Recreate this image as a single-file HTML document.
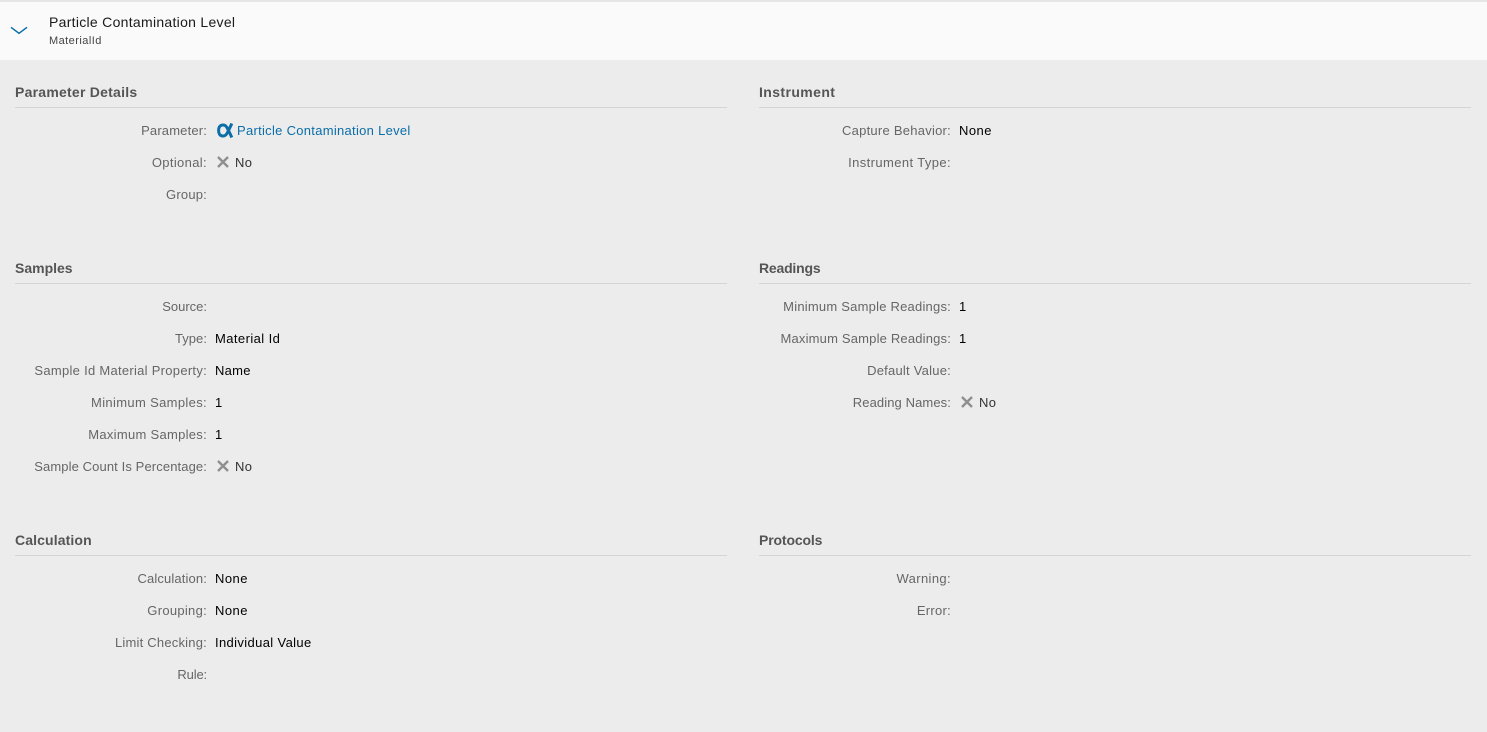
<!DOCTYPE html>
<html><head><meta charset="utf-8"><style>
html,body{margin:0;padding:0;width:1487px;height:732px;overflow:hidden;background:#ececec}
body{position:relative;font-family:"Liberation Sans",sans-serif;font-size:13px;color:#000}
#hd{position:absolute;left:0;top:2px;width:1487px;height:58px;background:#fafafa}
#tl{position:absolute;left:0;top:0;width:1487px;height:2px;background:#e6e6e6}
.t{position:absolute;white-space:nowrap;line-height:22px;letter-spacing:.3px}
.h{position:absolute;white-space:nowrap;line-height:20px;font-weight:bold;color:#555;font-size:14px}
.r{position:absolute;height:1px;width:712px;background:#d4d4d4}
.l{position:absolute;white-space:nowrap;line-height:22px;color:#666;text-align:right;width:240px}
.x{position:absolute;width:14px;height:14px}
</style></head><body>
<div id="tl"></div><div id="hd"></div>
<svg style="position:absolute;left:10px;top:25px" width="18" height="10"><path d="M1 2.3 L9 8.3 L17 2.3" fill="none" stroke="#0a6ea8" stroke-width="1.5"/></svg>
<div class="t" style="left:49px;top:12px;color:#1a1a1a;font-size:14px;letter-spacing:.29px;line-height:20px">Particle Contamination Level</div>
<div class="t" style="left:49px;top:31px;font-size:11px;letter-spacing:.45px;color:#444;line-height:20px">MaterialId</div>

<div class="h" style="left:15px;top:82px;letter-spacing:.24px">Parameter Details</div><div class="r" style="left:15px;top:107px"></div>
<div class="h" style="left:759px;top:82px;letter-spacing:.4px">Instrument</div><div class="r" style="left:759px;top:107px"></div>
<div class="h" style="left:15px;top:258px;letter-spacing:0">Samples</div><div class="r" style="left:15px;top:283px"></div>
<div class="h" style="left:759px;top:258px;letter-spacing:-.2px">Readings</div><div class="r" style="left:759px;top:283px"></div>
<div class="h" style="left:15px;top:530px;letter-spacing:.12px">Calculation</div><div class="r" style="left:15px;top:555px"></div>
<div class="h" style="left:759px;top:530px;letter-spacing:-.14px">Protocols</div><div class="r" style="left:759px;top:555px"></div>

<div class="l" style="left:-33px;top:120px;letter-spacing:.16px">Parameter:</div>
<svg style="position:absolute;left:216px;top:122px" width="18" height="17"><path d="M15.8 1.5 C14.5 4.5 13.5 6.5 12 9.5 C10.5 12.5 9.5 14 7 14 C3.8 14 2.6 11.5 2.6 8.5 C2.6 5.5 3.8 3 7 3 C9.5 3 10.5 4.5 12 7.5 C13.5 10.5 14.5 12.5 15.8 15.5" fill="none" stroke="#0b6ea6" stroke-width="3"/></svg>
<div class="t" style="left:237px;top:120px;color:#0a6ea8;letter-spacing:.29px">Particle Contamination Level</div>
<div class="l" style="left:-33px;top:152px;letter-spacing:.35px">Optional:</div>
<svg class="x" style="left:216px;top:155px"><path d="M2 2 L12 12 M12 2 L2 12" stroke="#8f8f8f" stroke-width="2.4"/></svg>
<div class="t" style="left:235px;top:152px;color:#333">No</div>
<div class="l" style="left:-33px;top:184px;letter-spacing:.2px">Group:</div>

<div class="l" style="left:711px;top:120px;letter-spacing:.25px">Capture Behavior:</div>
<div class="t" style="left:959px;top:120px;letter-spacing:.45px">None</div>
<div class="l" style="left:711px;top:152px;letter-spacing:.39px">Instrument Type:</div>

<div class="l" style="left:-33px;top:296px">Source:</div>
<div class="l" style="left:-33px;top:328px;letter-spacing:.05px">Type:</div>
<div class="t" style="left:215px;top:328px;letter-spacing:.42px">Material Id</div>
<div class="l" style="left:-33px;top:360px;letter-spacing:.28px">Sample Id Material Property:</div>
<div class="t" style="left:215px;top:360px;letter-spacing:.27px">Name</div>
<div class="l" style="left:-33px;top:392px;letter-spacing:.34px">Minimum Samples:</div>
<div class="t" style="left:215px;top:392px">1</div>
<div class="l" style="left:-33px;top:424px;letter-spacing:.29px">Maximum Samples:</div>
<div class="t" style="left:215px;top:424px">1</div>
<div class="l" style="left:-33px;top:456px;letter-spacing:.11px">Sample Count Is Percentage:</div>
<svg class="x" style="left:216px;top:459px"><path d="M2 2 L12 12 M12 2 L2 12" stroke="#8f8f8f" stroke-width="2.4"/></svg>
<div class="t" style="left:235px;top:456px;color:#333">No</div>

<div class="l" style="left:711px;top:296px;letter-spacing:.22px">Minimum Sample Readings:</div>
<div class="t" style="left:959px;top:296px">1</div>
<div class="l" style="left:711px;top:328px;letter-spacing:.18px">Maximum Sample Readings:</div>
<div class="t" style="left:959px;top:328px">1</div>
<div class="l" style="left:711px;top:360px;letter-spacing:.23px">Default Value:</div>
<div class="l" style="left:711px;top:392px;letter-spacing:.1px">Reading Names:</div>
<svg class="x" style="left:960px;top:395px"><path d="M2 2 L12 12 M12 2 L2 12" stroke="#8f8f8f" stroke-width="2.4"/></svg>
<div class="t" style="left:979px;top:392px;color:#333">No</div>

<div class="l" style="left:-33px;top:568px;letter-spacing:.13px">Calculation:</div>
<div class="t" style="left:215px;top:568px;letter-spacing:.45px">None</div>
<div class="l" style="left:-33px;top:600px;letter-spacing:.29px">Grouping:</div>
<div class="t" style="left:215px;top:600px;letter-spacing:.45px">None</div>
<div class="l" style="left:-33px;top:632px;letter-spacing:.21px">Limit Checking:</div>
<div class="t" style="left:215px;top:632px;letter-spacing:.36px">Individual Value</div>
<div class="l" style="left:-33px;top:664px;letter-spacing:-.15px">Rule:</div>

<div class="l" style="left:711px;top:568px;letter-spacing:.37px">Warning:</div>
<div class="l" style="left:711px;top:600px;letter-spacing:.28px">Error:</div>
</body></html>
